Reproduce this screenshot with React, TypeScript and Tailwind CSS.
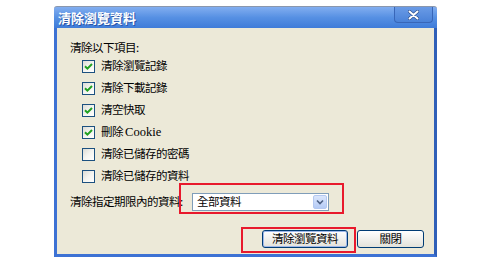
import React from "react";

const CJK = { fontFamily: '"Noto Sans CJK TC", "Noto Sans CJK SC", sans-serif' };

const ITEMS: { label: React.ReactNode; checked: boolean }[] = [
  { label: "清除瀏覽記錄", checked: true },
  { label: "清除下載記錄", checked: true },
  { label: "清空快取", checked: true },
  {
    label: (
      <>
        刪除 <span style={{ fontFamily: '"Liberation Serif", serif' }} className="text-[12.5px] tracking-normal">Cookie</span>
      </>
    ),
    checked: true,
  },
  { label: "清除已儲存的密碼", checked: false },
  { label: "清除已儲存的資料", checked: false },
];

function CheckBox({ checked }: { checked: boolean }) {
  return (
    <div className="flex h-[13px] w-[13px] items-center justify-center border border-[#1c5180] bg-gradient-to-br from-[#dcdcd6] via-[#f4f4f0] to-white">
      {checked && (
        <svg width="9" height="9" viewBox="0 0 9 9">
          <path d="M1 4.2 L3.4 6.6 L8 2" fill="none" stroke="#21a121" strokeWidth="2" />
        </svg>
      )}
    </div>
  );
}

export default function App() {
  return (
    <div className="relative h-[266px] w-[480px] overflow-hidden bg-white pl-[54px] pt-[6px]" style={CJK}>
      <div className="flex h-[251px] w-[383px] flex-col">
        {/* title bar */}
        <div className="flex h-[22px] items-center justify-between rounded-t-[3px] border-t border-[#8a97ad] bg-gradient-to-b from-[#82aef0] via-[#5690e3] to-[#3f7cd9] pl-[4px] pr-[4px]">
          <span className="text-[13px] font-bold leading-none text-white [text-shadow:1px_1px_0_#2a55a8]">清除瀏覽資料</span>
          <div className="flex h-[16px] w-[39px] items-center justify-center self-start rounded-b-[4px] border border-t-0 border-[#3866b8] bg-gradient-to-b from-[#6a9be6] to-[#4a82d8]">
            <svg width="11" height="10" viewBox="0 0 11 10">
              <path d="M1.5 1.5 L9.5 8.5 M9.5 1.5 L1.5 8.5" stroke="#2c4f8f" strokeWidth="3.4" strokeLinecap="round" />
              <path d="M1.5 1.5 L9.5 8.5 M9.5 1.5 L1.5 8.5" stroke="#ffffff" strokeWidth="2" strokeLinecap="round" />
            </svg>
          </div>
        </div>
        {/* body */}
        <div className="flex flex-1 flex-col border-x-[3px] border-b-[3px] border-[#3d72d4] border-r-[#2f5fb8] bg-[#ece9d8] pl-[13px] pr-[10px] pt-[11px] text-[11.5px] tracking-[-0.5px] text-black">
          <div className="h-[16px] leading-[16px]">清除以下項目:</div>
          <div className="flex flex-col pl-[12px]">
            {ITEMS.map((it, i) => (
              <div key={i} className="flex h-[22px] items-center gap-[6px]">
                <CheckBox checked={it.checked} />
                <span className="leading-none">{it.label}</span>
              </div>
            ))}
          </div>
          <div className="mt-[6px] flex h-[18px] items-center">
            <span className="w-[122px] whitespace-nowrap leading-none">清除指定期限內的資料:</span>
            <div className="flex h-[18px] w-[137px] items-center justify-between border border-[#7f9db9] bg-white pl-[4px] pr-[1px]">
              <span className="leading-none">全部資料</span>
              <div className="flex h-[14px] w-[14px] items-center justify-center rounded-[2px] border border-[#b4c8f0] bg-gradient-to-b from-[#dbe6fc] to-[#b5cbf5]">
                <svg width="8" height="6" viewBox="0 0 8 6">
                  <path d="M1 1.5 L4 4.5 L7 1.5" fill="none" stroke="#4d6185" strokeWidth="1.6" />
                </svg>
              </div>
            </div>
          </div>
          <div className="mt-[19px] flex justify-end gap-[9px]">
            <button className="flex h-[18px] w-[86px] items-center justify-center rounded-[3px] border border-[#003c74] bg-gradient-to-b from-white to-[#e3e2da] leading-none shadow-[inset_0_0_0_1px_#9fb8ea]">
              清除瀏覽資料
            </button>
            <button className="flex h-[18px] w-[67px] items-center justify-center rounded-[3px] border border-[#003c74] bg-gradient-to-b from-white to-[#e3e2da] leading-none">
              關閉
            </button>
          </div>
        </div>
      </div>
      {/* annotation highlights */}
      <div className="pointer-events-none absolute left-[179px] top-[183px] h-[31px] w-[165px] border-2 border-[#e8192c]" />
      <div className="pointer-events-none absolute left-[241px] top-[227px] h-[26px] w-[115px] border-2 border-[#e8192c]" />
    </div>
  );
}
